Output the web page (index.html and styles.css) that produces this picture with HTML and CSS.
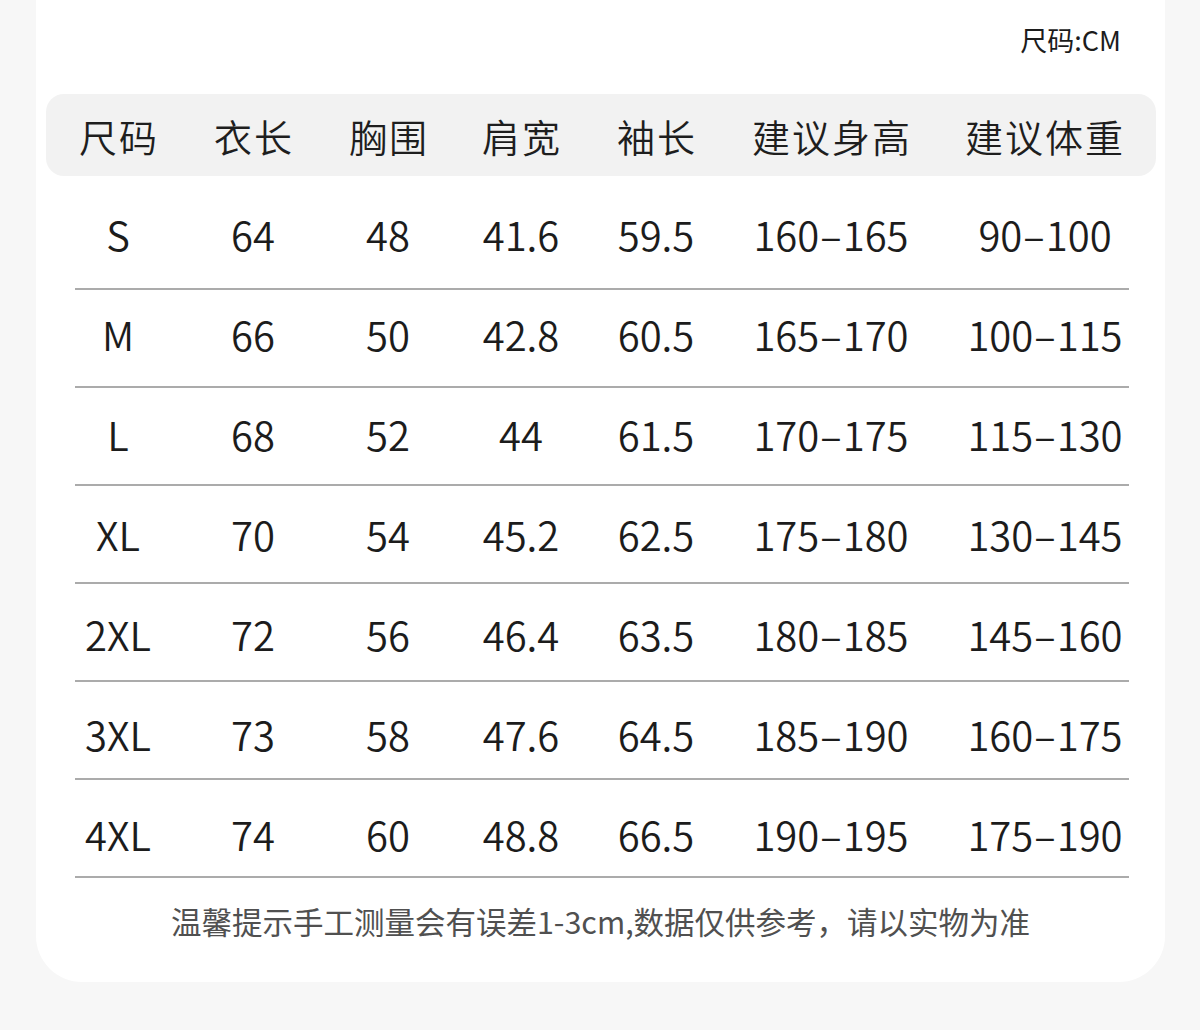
FILE: index.html
```html
<!DOCTYPE html>
<html lang="zh">
<head>
<meta charset="utf-8">
<link rel="stylesheet" href="styles.css">
</head>
<body>
<div class="card">
  <div class="unit">尺码:CM</div>
  <div class="table">
    <div class="head">
      <div>尺码</div><div>衣长</div><div>胸围</div><div>肩宽</div><div>袖长</div><div>建议身高</div><div>建议体重</div>
    </div>
    <div class="row"><div>S</div><div>64</div><div>48</div><div>41.6</div><div>59.5</div><div>160<span class="dash">–</span>165</div><div>90<span class="dash">–</span>100</div></div>
    <div class="row"><div>M</div><div>66</div><div>50</div><div>42.8</div><div>60.5</div><div>165<span class="dash">–</span>170</div><div>100<span class="dash">–</span>115</div></div>
    <div class="row"><div>L</div><div>68</div><div>52</div><div>44</div><div>61.5</div><div>170<span class="dash">–</span>175</div><div>115<span class="dash">–</span>130</div></div>
    <div class="row"><div>XL</div><div>70</div><div>54</div><div>45.2</div><div>62.5</div><div>175<span class="dash">–</span>180</div><div>130<span class="dash">–</span>145</div></div>
    <div class="row"><div>2XL</div><div>72</div><div>56</div><div>46.4</div><div>63.5</div><div>180<span class="dash">–</span>185</div><div>145<span class="dash">–</span>160</div></div>
    <div class="row"><div>3XL</div><div>73</div><div>58</div><div>47.6</div><div>64.5</div><div>185<span class="dash">–</span>190</div><div>160<span class="dash">–</span>175</div></div>
    <div class="row"><div>4XL</div><div>74</div><div>60</div><div>48.8</div><div>66.5</div><div>190<span class="dash">–</span>195</div><div>175<span class="dash">–</span>190</div></div>
  </div>
  <div class="note">温馨提示手工测量会有误差1-3cm,数据仅供参考，请以实物为准</div>
</div>
</body>
</html>
```

FILE: styles.css
```css
html, body {
  margin: 0;
  padding: 0;
  background: #f7f7f7;
}
body {
  font-family: "Noto Sans CJK SC", "Noto Sans", sans-serif;
  color: #1c1c1c;
}
.card {
  margin-left: 36px;
  width: 1129px;
  height: 982px;
  background: #ffffff;
  border-radius: 0 0 46px 46px;
  box-sizing: border-box;
  padding: 0 10px;
  display: flex;
  flex-direction: column;
}
.unit {
  align-self: flex-end;
  margin-top: 22px;
  margin-right: 34px;
  font-size: 27px;
  line-height: 36px;
  color: #1c1c1c;
}
.table {
  margin-top: 36px;
  width: 1110px;
}
.head {
  display: grid;
  grid-template-columns: 144px 126px 144px 122px 148px 202px 224px;
  height: 82px;
  align-items: center;
  background: #f2f2f2;
  border-radius: 18px;
  font-size: 38px;
  letter-spacing: 2px;
  font-weight: 350;
  color: #1e1e1e;
}
.head div, .row div {
  text-align: center;
  white-space: nowrap;
}
.head div {
  padding-left: 2px;
}
.row {
  display: grid;
  grid-template-columns: 86px 184px 86px 180px 90px 260px 168px;
  margin: 0 27px 0 29px;
  height: 98px;
  box-sizing: border-box;
  align-items: center;
  border-bottom: 2px solid #ababab;
  font-size: 40px;
  font-weight: 350;
}
.dash {
  margin: 0 1px;
}
.row:nth-child(2) { margin-top: 16px; padding-bottom: 12px; }
.row:nth-child(3) { padding-bottom: 8px; }
.row:nth-child(4) { padding-bottom: 4px; }
.row:nth-child(5) { padding-bottom: 0; }
.row:nth-child(6) { padding-top: 4px; }
.row:nth-child(7) { padding-top: 8px; }
.row:nth-child(8) { padding-top: 12px; }
.note {
  margin-top: 22px;
  text-align: center;
  font-size: 30.5px;
  line-height: 42px;
  color: #505050;
}
```
